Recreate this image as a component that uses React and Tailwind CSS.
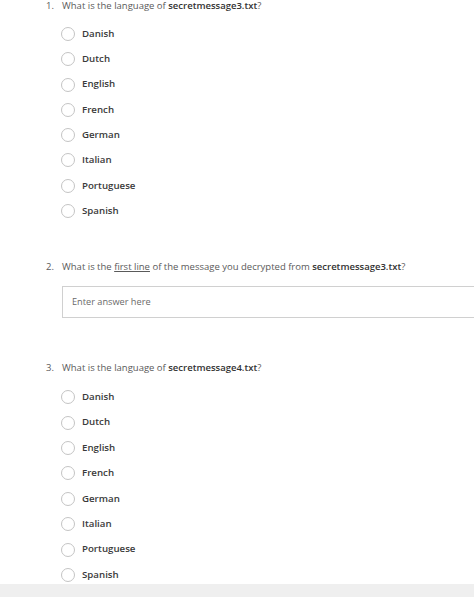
import React from "react";

const langs = ["Danish", "Dutch", "English", "French", "German", "Italian", "Portuguese", "Spanish"];

function Radio({ label, h }) {
  return (
    <div className={"flex items-center " + h}>
      <span className="ml-[61px] box-border h-[14px] w-[14px] rounded-full border-[1.5px] border-[#c4c4c4] bg-white" />
      <span className="ml-[7px] text-[9.7px] font-semibold text-[#3a3a3a]">{label}</span>
    </div>
  );
}

function Question({ n, children }) {
  return (
    <div className="flex h-[12px] items-center text-[9.5px] leading-[12px] text-[#5a5a5a]">
      <span className="ml-[46px] w-[16px]">{n}.</span>
      <span className="whitespace-nowrap">{children}</span>
    </div>
  );
}

export default function App() {
  return (
    <div className="w-[474px] overflow-hidden bg-white" style={{ fontFamily: '"Open Sans", sans-serif' }}>
      <Question n={1}>
        What is the language of <b className="font-semibold text-[#333]">secretmessage3.txt</b>?
      </Question>
      <div className="mt-[9.35px]">
        {langs.map((l) => (
          <Radio key={"a" + l} label={l} h="h-[25.3px]" />
        ))}
      </div>
      <div className="mt-[37.35px]">
        <Question n={2}>
          What is the <span className="underline">first line</span> of the message you decrypted from{" "}
          <b className="font-semibold text-[#333]">secretmessage3.txt</b>?
        </Question>
      </div>
      <div className="ml-[62px] mt-[13px] box-border flex h-[32px] w-[420px] items-center border border-[#d0d0d0] pl-[9px] text-[9.2px] text-[#6a6a6a]">
        Enter answer here
      </div>
      <div className="mt-[44px]">
        <Question n={3}>
          What is the language of <b className="font-semibold text-[#333]">secretmessage4.txt</b>?
        </Question>
      </div>
      <div className="mt-[10.3px]">
        {langs.map((l) => (
          <Radio key={"b" + l} label={l} h="h-[25.45px]" />
        ))}
      </div>
      <div className="-mt-[4px] h-[20px] bg-[#efefef]" />
    </div>
  );
}
